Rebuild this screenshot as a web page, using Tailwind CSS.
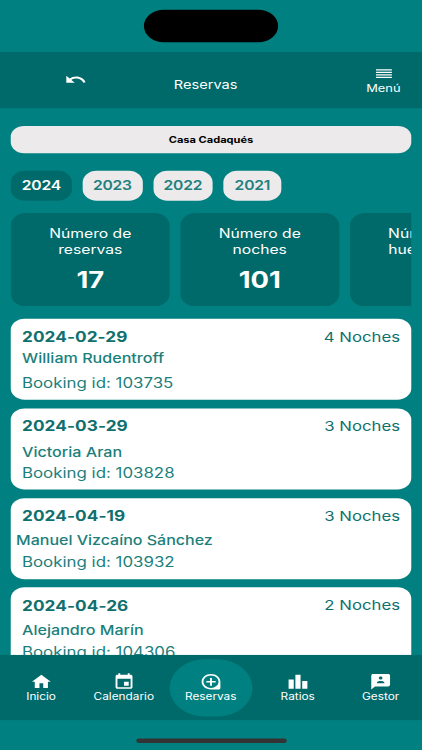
<!DOCTYPE html>
<html lang="es">
<head>
<meta charset="utf-8">
<title>Reservas</title>
<script src="https://cdn.jsdelivr.net/npm/@tailwindcss/browser@4"></script>
</head>
<body class="bg-[#008080]">
<div class="w-[422px] h-[750px] overflow-hidden">
<!-- 393x852 device canvas fitted to the window -->
<div class="w-[393px] h-[852px] origin-top-left [transform:scale(1.07379,0.88028)] flex flex-col overflow-hidden bg-[#008080] text-white font-['Inter','Liberation_Sans',sans-serif]">
  <div class="h-[59px] shrink-0 flex justify-center pt-[11px]">
    <div class="w-[125px] h-[37px] rounded-full bg-black"></div>
  </div>
  <header class="h-[64px] shrink-0 bg-[#006a6a] grid grid-cols-[142px_99px_152px]">
    <div class="pl-[60px] pt-[21px]">
      <svg class="w-[21px] h-[21px]" viewBox="0 0 24 24" fill="currentColor"><path d="M12.5 8c-2.65 0-5.05.99-6.9 2.6L2 7v9h9l-3.62-3.62c1.39-1.16 3.16-1.88 5.12-1.88 3.54 0 6.55 2.31 7.6 5.5l2.37-.78C21.08 11.03 17.15 8 12.5 8z"/></svg>
    </div>
    <div class="pt-[27px] text-center text-[13.6px] leading-[20px]">Reservas</div>
    <div class="pl-[84px] pr-[4px] pt-[19px] flex flex-col items-center w-[152px]">
      <svg class="w-[15px] h-[12px]" viewBox="0 0 15 12" fill="currentColor"><path d="M0 .8h15v1.300H0zM0 3.630h15v1.300H0zM0 6.460h15v1.300H0zM0 9.290h15v1.300H0z"/></svg>
      <div class="text-[12px] leading-[16px] mt-[3px]">Menú</div>
    </div>
  </header>
  <main class="flex-1 min-h-0 overflow-hidden px-[10.2px] pt-[20px]">
    <div class="h-[31px] rounded-[12.5px] bg-[#eceaeb] text-black text-center font-bold text-[10.3px] leading-[32px]">Casa Cadaqués</div>
    <div class="flex gap-[9.8px] mt-[19.5px] text-[14.6px] tracking-[-0.2px] leading-[34px] font-semibold text-[#21807e]">
      <div class="h-[34px] w-[56.6px] text-center rounded-[13px] bg-[#006a6a] text-white">2024</div>
      <div class="h-[34px] w-[56.2px] text-center rounded-[13px] bg-[#eceaeb]">2023</div>
      <div class="h-[34px] w-[55.6px] text-center rounded-[13px] bg-[#eceaeb]">2022</div>
      <div class="h-[34px] w-[54.3px] text-center rounded-[13px] bg-[#eceaeb]">2021</div>
    </div>
    <div class="flex gap-[10px] mt-[14.5px] overflow-hidden text-center text-[14.6px] leading-[18px]">
      <div class="w-[147.8px] h-[106px] shrink-0 rounded-[14px] bg-[#006a6a] pt-[14px]">Número de<br>reservas<div class="text-[25.5px] leading-[32px] mt-[9.500px] font-bold">17</div></div>
      <div class="w-[147.8px] h-[106px] shrink-0 rounded-[14px] bg-[#006a6a] pt-[14px]">Número de<br>noches<div class="text-[25.5px] leading-[32px] mt-[9.500px] font-bold">101</div></div>
      <div class="w-[147.8px] h-[106px] shrink-0 rounded-[14px] bg-[#006a6a] pt-[14px]">Número de<br>huespedes</div>
    </div>
    <div class="flex flex-col gap-[9.8px] mt-[14px] text-[#1c7f7c]">
      <article class="h-[92px] shrink-0 rounded-[13px] bg-white px-[10.3px] pt-[9.2px]">
        <div class="flex justify-between text-[15.6px] leading-[22px] text-[#10706d]"><b class="font-bold text-[16px] tracking-[0.08px]">2024-02-29</b><span class="pt-[0.8px]">4 Noches</span></div>
        <div class="mt-[1.800px] h-[25.400px] text-[15px] leading-[22px] font-medium">William Rudentroff</div>
        <div class="mt-[3.600px] text-[15.7px] leading-[22px]">Booking id: 103735</div>
      </article>
      <article class="h-[92px] shrink-0 rounded-[13px] bg-white px-[10.3px] pt-[9.2px]">
        <div class="flex justify-between text-[15.6px] leading-[22px] text-[#10706d]"><b class="font-bold text-[16px] tracking-[0.08px]">2024-03-29</b><span class="pt-[0.8px]">3 Noches</span></div>
        <div class="mt-[7px] h-[20.200px] text-[15px] leading-[22px] font-medium">Victoria Aran</div>
        <div class="mt-[3.600px] text-[15.7px] leading-[22px]">Booking id: 103828</div>
      </article>
      <article class="h-[92px] shrink-0 rounded-[13px] bg-white px-[10.3px] pt-[9.2px]">
        <div class="flex justify-between text-[15.6px] leading-[22px] text-[#10706d]"><b class="font-bold text-[16px] tracking-[0.08px]">2024-04-19</b><span class="pt-[0.8px]">3 Noches</span></div>
        <div class="mt-[5.200px] h-[22px] -ml-[5.5px] text-[14.9px] leading-[22px] font-medium">Manuel Vizcaíno Sánchez</div>
        <div class="mt-[3.600px] text-[15.7px] leading-[22px]">Booking id: 103932</div>
      </article>
      <article class="h-[92px] shrink-0 rounded-[13px] bg-white px-[10.3px] pt-[9.2px]">
        <div class="flex justify-between text-[15.6px] leading-[22px] text-[#10706d]"><b class="font-bold text-[16px] tracking-[0.08px]">2024-04-26</b><span class="pt-[0.8px]">2 Noches</span></div>
        <div class="mt-[5.800px] h-[21.400px] text-[15px] leading-[22px] font-medium">Alejandro Marín</div>
        <div class="mt-[3px] text-[15.7px] leading-[22px]">Booking id: 104306</div>
      </article>
    </div>
  </main>
  <nav class="h-[74px] shrink-0 bg-[#006a6a] grid grid-cols-[76.5px_77.5px_84.5px_77.5px_77px] justify-items-center items-center text-[11px] leading-[12px]">
    <div class="flex flex-col items-center pb-[2px]">
      <svg class="w-[21px] h-[21px]" viewBox="0 0 24 24" fill="currentColor"><path d="M10 20v-6h4v6h5v-8h3L12 3 2 12h3v8z"/></svg>
      Inicio
    </div>
    <div class="flex flex-col items-center pb-[2px]">
      <svg class="w-[21px] h-[21px]" viewBox="0 0 24 24" fill="currentColor"><path d="M17 12h-5v5h5v-5zM16 1v2H8V1H6v2H5c-1.11 0-1.99.9-1.99 2L3 19c0 1.1.89 2 2 2h14c1.1 0 2-.9 2-2V5c0-1.1-.9-2-2-2h-1V1h-2zm3 18H5V8h14v11z"/></svg>
      Calendario
    </div>
    <div class="flex flex-col items-center justify-center pb-[2px] w-[77px] h-[65px] rounded-full bg-[#008080]">
      <svg class="w-[21px] h-[21px]" viewBox="0 0 24 24" fill="currentColor"><path d="M13 7h-2v4H7v2h4v4h2v-4h4v-2h-4V7zm-1-5C6.49 2 2 6.49 2 12s4.49 10 10 10h8c1.1 0 2-.9 2-2v-8c0-5.51-4.49-10-10-10zm0 18c-4.41 0-8-3.59-8-8s3.59-8 8-8 8 3.59 8 8-3.590 8-8 8z"/></svg>
      Reservas
    </div>
    <div class="flex flex-col items-center pb-[2px]">
      <svg class="w-[21px] h-[21px]" viewBox="0 0 24 24" fill="currentColor"><path d="M2 9h5.500v12H2zM9.250 3h5.500v18h-5.500zM16.500 11H22v10h-5.500z"/></svg>
      Ratios
    </div>
    <div class="flex flex-col items-center pb-[2px]">
      <svg class="w-[21px] h-[21px]" viewBox="0 0 24 24" fill="currentColor"><path d="M20 2H4.010c-1.100 0-2 .9-2 2L2 22l4-4h14c1.100 0 2-.9 2-2V4c0-1.100-.9-2-2-2zm-8 3c1.100 0 2 .9 2 2s-.9 2-2 2-2-.9-2-2 .9-2 2-2zm4 9H8v-.570c0-.810.480-1.530 1.220-1.850.850-.370 1.790-.580 2.780-.580s1.930.210 2.780.580c.740.320 1.220 1.040 1.220 1.850V14z"/></svg>
      Gestor
    </div>
  </nav>
  <div class="h-[34px] shrink-0 flex justify-center pt-[21px]">
    <div class="w-[140px] h-[5px] rounded-full bg-[#333333]"></div>
  </div>
</div>
</div>
</body>
</html>
